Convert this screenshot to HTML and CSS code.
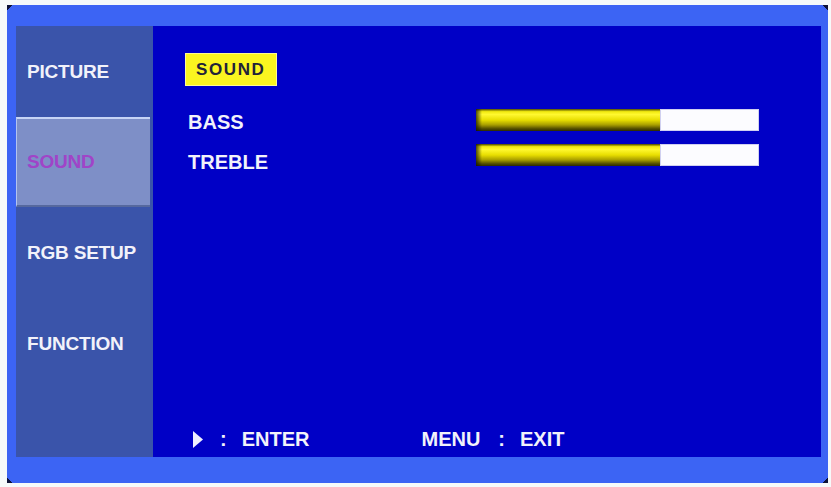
FILE: index.html
```html
<!DOCTYPE html>
<html>
<head>
<meta charset="utf-8">
<link rel="stylesheet" href="styles.css">
</head>
<body>
<div class="frame">
  <div class="screen">
    <nav class="sidebar">
      <div class="item">PICTURE</div>
      <div class="item selected">SOUND</div>
      <div class="item">RGB SETUP</div>
      <div class="item">FUNCTION</div>
    </nav>
    <main class="main">
      <div class="header">SOUND</div>
      <div class="rows">
        <div class="labels">
          <div class="label">BASS</div>
          <div class="label">TREBLE</div>
        </div>
        <div class="bars">
          <div class="bar"><div class="fill" style="width:65%"></div><div class="rest"></div></div>
          <div class="bar"><div class="fill" style="width:65%"></div><div class="rest"></div></div>
        </div>
      </div>
      <div class="footer">
        <svg class="tri" width="10" height="17" viewBox="0 0 10 17"><polygon points="0,0 10,8.5 0,17" fill="#eef0ff"/></svg>
        <span class="colon c1">:</span>
        <span class="enter">ENTER</span>
        <span class="menu">MENU</span>
        <span class="colon c2">:</span>
        <span class="exit">EXIT</span>
      </div>
    </main>
  </div>
</div>
</body>
</html>
```
FILE: styles.css
```css
html, body {
  margin: 0;
  padding: 0;
  background: #f6fafa;
}
body {
  font-family: "Liberation Sans", Arial, sans-serif;
  font-weight: bold;
}
.frame {
  margin: 5px 0 0 7px;
  width: 821px;
  height: 478px;
  box-sizing: border-box;
  padding: 21px 7px 26px 9px;
  background:
    linear-gradient(135deg, #0c1238 0 4px, transparent 4px) top left / 10px 10px no-repeat,
    linear-gradient(225deg, #0c1238 0 4px, transparent 4px) top right / 10px 10px no-repeat,
    linear-gradient(45deg, #0c1238 0 4px, transparent 4px) bottom left / 10px 10px no-repeat,
    linear-gradient(315deg, #0c1238 0 4px, transparent 4px) bottom right / 10px 10px no-repeat,
    #3c64f4;
}
.screen {
  display: grid;
  grid-template-columns: 137px 1fr;
  height: 431px;
}
.sidebar {
  background: #3a54aa;
  display: flex;
  flex-direction: column;
}
.item {
  height: 91px;
  box-sizing: border-box;
  display: flex;
  align-items: center;
  padding-left: 11px;
  color: #f2f2fa;
  font-size: 19px;
  letter-spacing: -0.2px;
}
.item.selected {
  height: 90px;
  margin-right: 3px;
  padding-left: 10px;
  background: #7e8fc7;
  border-top: 2px solid #c6d4f6;
  border-left: 1px solid #b4c4f0;
  border-bottom: 2px solid #56689e;
  color: #a044c8;
}
.main {
  background: #0000c6;
  display: flex;
  flex-direction: column;
  padding: 27px 0 6px 0;
  box-sizing: border-box;
  color: #f2f2fa;
}
.header {
  margin-left: 32px;
  width: 92px;
  height: 33px;
  box-sizing: border-box;
  padding-left: 10px;
  display: flex;
  align-items: center;
  background: #fbf520;
  border: 1px solid #fffb90;
  color: #22223a;
  font-size: 17px;
  letter-spacing: 1.6px;
}
.rows {
  display: flex;
  margin-top: 23px;
}
.labels {
  width: 288px;
  margin-left: 35px;
  padding-top: 1px;
  display: flex;
  flex-direction: column;
  gap: 16px;
}
.label {
  font-size: 20px;
  line-height: 24px;
}
.bars {
  display: flex;
  flex-direction: column;
  gap: 13px;
}
.bar {
  display: flex;
  width: 283px;
  height: 22px;
}
.fill {
  height: 100%;
  background:
    linear-gradient(90deg, rgba(20,20,0,0.75) 0, rgba(20,20,0,0) 6px),
    linear-gradient(180deg, #4a4600 0, #f2ea10 12%, #fff830 25%, #e8de00 50%, #a89e00 72%, #5a5400 88%, #2c2a00 100%);
}
.rest {
  flex: 1;
  height: 100%;
  box-sizing: border-box;
  background: #fcfcff;
  border: 1px solid #d0d0f0;
}
.footer {
  margin-top: auto;
  display: flex;
  align-items: center;
  padding-left: 40px;
  font-size: 20px;
  line-height: 24px;
}
.tri { display: block; margin-right: 17px; }
.c1 { margin-right: 15px; }
.enter { margin-right: 112px; }
.menu { margin-right: 18px; }
.c2 { margin-right: 15px; }
```
